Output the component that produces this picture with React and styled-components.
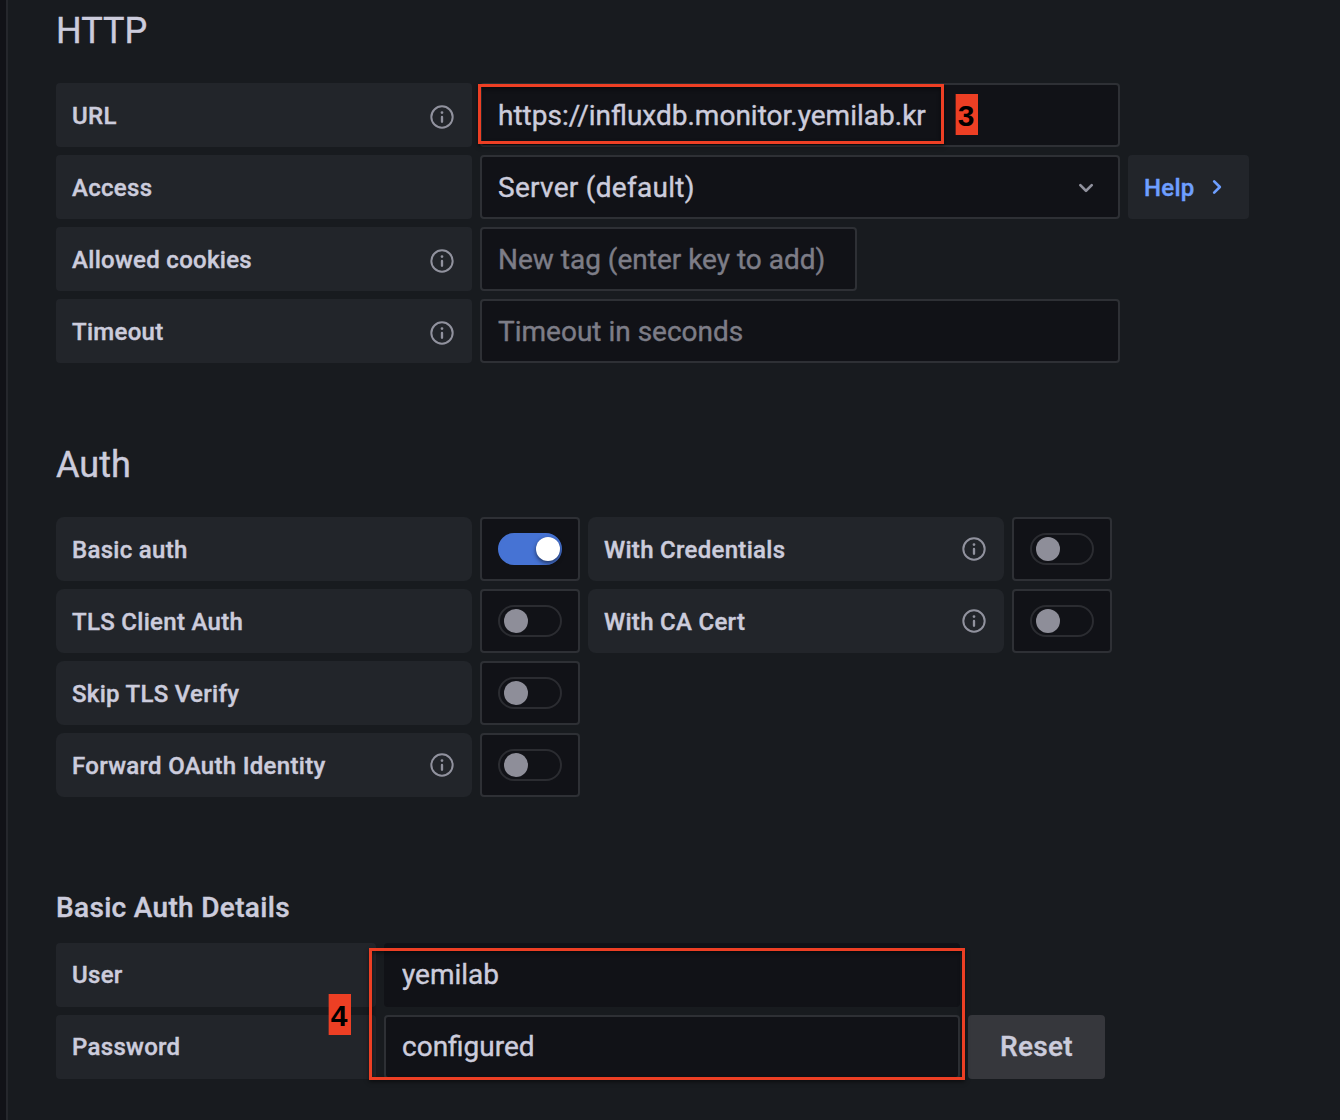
import React from 'react';
import styled, { createGlobalStyle, css } from 'styled-components';

const Global = createGlobalStyle`
  *, *::before, *::after { box-sizing: border-box; }
  body {
    margin: 0;
    background: #111217;
    color: #ccccdc;
    font-family: Roboto, "Liberation Sans", sans-serif;
    -webkit-font-smoothing: antialiased;
    -webkit-text-stroke: 0.4px currentColor;
  }
  h3, h6 { margin: 0; }
`;

const Page = styled.main`
  position: relative;
  width: 1340px;
  height: 1120px;
  padding-left: 6px;
  overflow: hidden;
`;

const Panel = styled.div`
  height: 100%;
  padding: 9px 0 0 48px;
  background: #181b1f;
  border-left: 2px solid #25272c;
`;

const Section = styled.section`
  margin-bottom: ${(p) => p.$gap}px;
`;

const Heading = styled.h3`
  font-size: 36px;
  line-height: 44px;
  font-weight: 400;
  margin-bottom: 30px;
`;

const SubHeading = styled.h6`
  font-size: 28px;
  line-height: 32px;
  font-weight: 500;
  margin-bottom: 19px;
  letter-spacing: 0.32px;
`;

const Rows = styled.div`
  display: flex;
  flex-direction: column;
  gap: 8px;
`;

const Row = styled.div`
  display: flex;
  gap: 8px;
  height: 64px;
`;

const Label = styled.label`
  display: flex;
  align-items: center;
  justify-content: space-between;
  width: ${(p) => p.$width || 416}px;
  padding: 0 16px;
  border-radius: ${(p) => (p.$round ? 8 : 4)}px;
  background: #22252a;
  font-size: 24px;
  font-weight: 500;
  letter-spacing: 0.3px;

  span { padding-top: ${(p) => (p.$width ? 0 : 2)}px; }
  svg { margin-top: ${(p) => (p.$round ? 0 : 4)}px; }
`;

const field = css`
  border: 2px solid ${(p) => (p.$plain ? '#111217' : '#2e3035')};
  border-radius: 4px;
  background: #111217;
`;

const Input = styled.input`
  ${field}
  width: ${(p) => p.$width || 640}px;
  padding: 0 16px ${(p) => p.$lift || 0}px;
  outline: none;
  color: #ccccdc;
  font: 400 28px Roboto, "Liberation Sans", sans-serif;
  -webkit-text-stroke: inherit;

  &::placeholder { color: #7d7d87; opacity: 1; -webkit-text-stroke: 0.4px #7d7d87; }
`;

const Select = styled.div`
  ${field}
  display: flex;
  align-items: center;
  justify-content: space-between;
  width: 640px;
  padding: 0 16px;
  font-size: 28px;
  letter-spacing: 0.28px;

  svg { margin-top: 2px; }
`;

const SwitchBox = styled.div`
  ${field}
  display: flex;
  align-items: center;
  width: 100px;
  padding: 0 16px;
`;

const Track = styled.span`
  display: flex;
  align-items: center;
  justify-content: ${(p) => (p.$on ? 'flex-end' : 'flex-start')};
  width: 64px;
  height: 32px;
  padding: 0 ${(p) => (p.$on ? 0 : 4)}px;
  border: 2px solid ${(p) => (p.$on ? '#4673d4' : '#2b2c31')};
  border-radius: 16px;
  background: ${(p) => (p.$on ? '#4673d4' : '#111217')};
`;

const Thumb = styled.span`
  width: 24px;
  height: 24px;
  border-radius: 50%;
  background: ${(p) => (p.$on ? '#fff' : '#8e8e99')};
  box-shadow: ${(p) => (p.$on ? '0 2px 4px rgba(0, 0, 0, 0.55)' : 'none')};
`;

const HelpButton = styled.button`
  display: flex;
  align-items: center;
  gap: 6px;
  width: 121px;
  padding: 0 16px;
  border: 0;
  border-radius: 4px;
  background: #22252a;
  color: #6e9fff;
  font: 500 24px Roboto, "Liberation Sans", sans-serif;
  letter-spacing: 0.26px;
  -webkit-text-stroke: 0.4px currentColor;

  span { padding-top: 2px; }
  svg { stroke: none; }
`;

const ResetButton = styled.button`
  width: 137px;
  padding: 0 0 2px;
  border: 0;
  border-radius: 4px;
  background: #36373c;
  color: #ccccdc;
  font: 500 28px Roboto, "Liberation Sans", sans-serif;
  letter-spacing: 0.3px;
  -webkit-text-stroke: 0.4px currentColor;
`;

const Outline = styled.div`
  position: absolute;
  left: ${(p) => p.$x}px;
  top: ${(p) => p.$y}px;
  width: ${(p) => p.$w}px;
  height: ${(p) => p.$h}px;
  border: 3px solid #ed3f24;
  pointer-events: none;
  box-shadow: 0 2px 4px rgba(0, 0, 0, 0.5), inset 0 2px 4px rgba(0, 0, 0, 0.5);
`;

const Badge = styled.div`
  position: absolute;
  left: ${(p) => p.$x}px;
  top: ${(p) => p.$y}px;
  display: flex;
  align-items: center;
  justify-content: center;
  width: 22px;
  height: 41px;
  padding: 3px 2px 0 0;
  background: #ed3f24;
  box-shadow: -1px 0 0 rgba(237, 63, 36, 0.35);
  color: #000;
  font: 700 30px "Liberation Sans", sans-serif;
  -webkit-text-stroke: 0;
`;

const Info = () => (
  <svg width="28" height="28" viewBox="0 0 24 24" fill="#91929e">
    <path d="M12,2A10,10,0,1,0,22,12,10,10,0,0,0,12,2Zm0,18.3a8.3,8.3,0,1,1,8.3-8.3A8.3,8.3,0,0,1,12,20.3ZM12,11a1,1,0,0,0-1,1v4a1,1,0,0,0,2,0V12A1,1,0,0,0,12,11Zm0-4a1.2,1.2,0,1,0,1.2,1.2A1.2,1.2,0,0,0,12,7Z" />
  </svg>
);

const AngleDown = () => (
  <svg width="32" height="32" viewBox="0 0 24 24" fill="#91929e">
    <path d="M17,9.17a1,1,0,0,0-1.41,0L12,12.71,8.46,9.17a1,1,0,0,0-1.41,0,1,1,0,0,0,0,1.42l4.24,4.24a1,1,0,0,0,1.42,0L17,10.59A1,1,0,0,0,17,9.17Z" />
  </svg>
);

const AngleRight = () => (
  <svg width="32" height="32" viewBox="0 0 24 24" fill="currentColor">
    <path d="M14.83,11.29,10.59,7.05a1,1,0,0,0-1.42,0,1,1,0,0,0,0,1.41L12.71,12,9.17,15.54a1,1,0,0,0,0,1.41,1,1,0,0,0,.71.29,1,1,0,0,0,.71-.29l4.24-4.24A1,1,0,0,0,14.83,11.29Z" />
  </svg>
);

const FieldLabel = ({ children, info, round, width }) => (
  <Label $round={round} $width={width}>
    <span>{children}</span>
    {info && <Info />}
  </Label>
);

const Toggle = ({ label, info, on }) => (
  <>
    <FieldLabel round info={info}>{label}</FieldLabel>
    <SwitchBox>
      <Track $on={on}><Thumb $on={on} /></Track>
    </SwitchBox>
  </>
);

const toggles = [
  [{ label: 'Basic auth', on: true }, { label: 'With Credentials', info: true }],
  [{ label: 'TLS Client Auth' }, { label: 'With CA Cert', info: true }],
  [{ label: 'Skip TLS Verify' }],
  [{ label: 'Forward OAuth Identity', info: true }],
];

export default function App() {
  return (
    <Page>
      <Global />
      <Panel>
        <Section $gap={80}>
          <Heading>HTTP</Heading>
          <Rows>
            <Row>
              <FieldLabel info>URL</FieldLabel>
              <Input defaultValue="https://influxdb.monitor.yemilab.kr" />
            </Row>
            <Row>
              <FieldLabel>Access</FieldLabel>
              <Select><span>Server (default)</span><AngleDown /></Select>
              <HelpButton><span>Help</span><AngleRight /></HelpButton>
            </Row>
            <Row>
              <FieldLabel info>Allowed cookies</FieldLabel>
              <Input $width={377} placeholder="New tag (enter key to add)" />
            </Row>
            <Row>
              <FieldLabel info>Timeout</FieldLabel>
              <Input placeholder="Timeout in seconds" />
            </Row>
          </Rows>
        </Section>
        <Section $gap={95}>
          <Heading>Auth</Heading>
          <Rows>
            {toggles.map((row) => (
              <Row key={row[0].label}>
                {row.map((t) => <Toggle key={t.label} {...t} />)}
              </Row>
            ))}
          </Rows>
        </Section>
        <Section $gap={0}>
          <SubHeading>Basic Auth Details</SubHeading>
          <Rows>
            <Row>
              <FieldLabel width={320}>User</FieldLabel>
              <Input $plain $width={576} $lift={2} defaultValue="yemilab" />
            </Row>
            <Row>
              <FieldLabel width={320}>Password</FieldLabel>
              <Input $width={576} $lift={2} defaultValue="configured" />
              <ResetButton>Reset</ResetButton>
            </Row>
          </Rows>
        </Section>
      </Panel>
      <Outline $x={478} $y={84} $w={466} $h={60} />
      <Badge $x={956} $y={94}>3</Badge>
      <Outline $x={369} $y={948} $w={596} $h={132} />
      <Badge $x={329} $y={994}>4</Badge>
    </Page>
  );
}
